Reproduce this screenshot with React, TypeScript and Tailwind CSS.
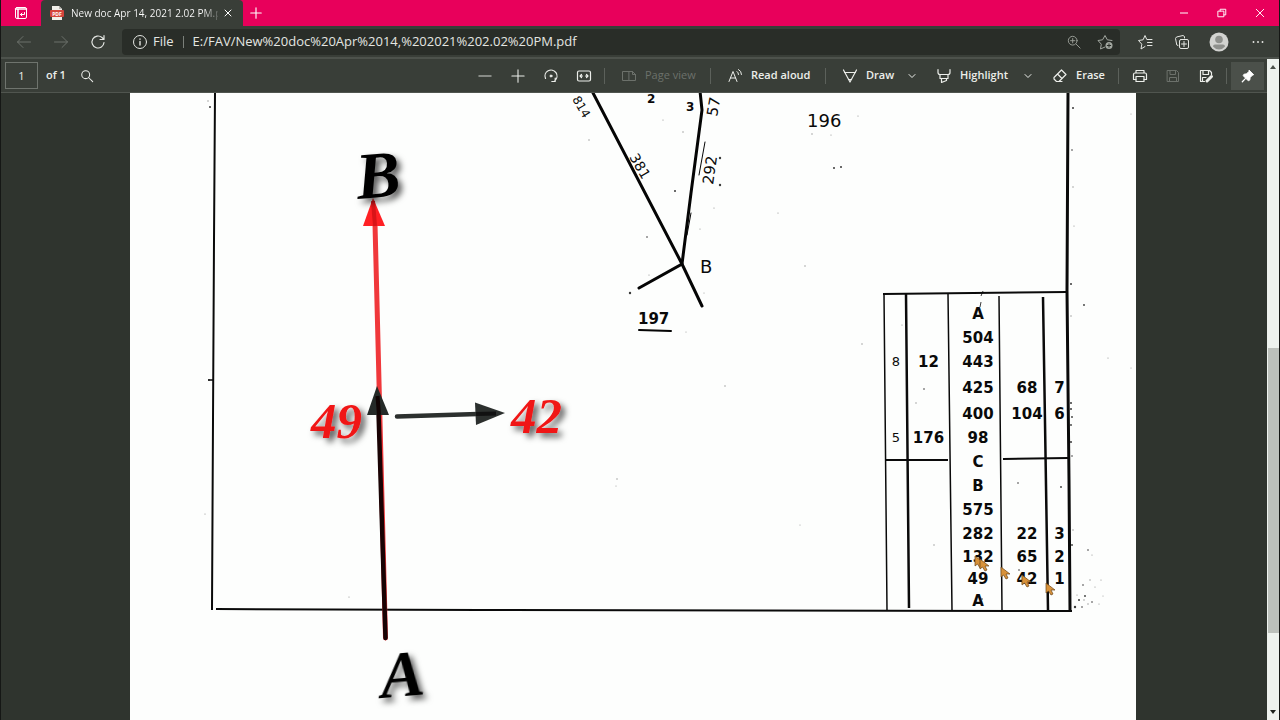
// PDF viewer window: tab strip, address bar, PDF toolbar, and the scanned survey sheet
// with its measurement ladder and the arrows drawn on top.

import type { ReactNode } from "react"

type Dot = [number, number, number]

// Measurement ladder, top to bottom: [left no., left offset, chain, right offset, right no.]
const ladder: { cells: string[]; height: string }[] = [
    { cells: ["", "", "A", "", ""], height: "h-6" },
    { cells: ["", "", "504", "", ""], height: "h-6" },
    { cells: ["8", "12", "443", "", ""], height: "h-6" },
    { cells: ["", "", "425", "68", "7"], height: "h-7" },
    { cells: ["", "", "400", "104", "6"], height: "h-6" },
    { cells: ["5", "176", "98", "", ""], height: "h-6" },
    { cells: ["", "", "C", "", ""], height: "h-6" },
    { cells: ["", "", "B", "", ""], height: "h-6" },
    { cells: ["", "", "575", "", ""], height: "h-6" },
    { cells: ["", "", "282", "22", "3"], height: "h-6" },
    { cells: ["", "", "132", "65", "2"], height: "h-[22px]" },
    { cells: ["", "", "49", "42", "1"], height: "h-[22px]" },
    { cells: ["", "", "A", "", ""], height: "h-[22px]" },
]

// Dirt left by the scanner
const specks: Dot[] = [
    [675, 191, 1], [720, 158, 1.2], [720, 185, 1.2], [834, 168, 1], [841, 167, 1], [630, 293, 1.2],
    [647, 237, 0.8], [805, 266, 0.7], [778, 213, 0.6], [812, 134, 0.7], [831, 135, 0.6], [858, 116, 0.6],
    [663, 120, 0.6], [683, 132, 0.7], [589, 140, 0.7], [700, 229, 0.6], [714, 208, 0.6], [862, 344, 0.7],
    [725, 386, 0.7], [617, 479, 0.7], [616, 486, 0.5], [800, 525, 0.5], [924, 389, 0.8], [934, 545, 0.7],
    [902, 325, 0.6], [1084, 305, 0.9], [1108, 358, 0.6], [1131, 368, 0.5], [1061, 487, 0.9], [1018, 483, 0.8],
    [1073, 108, 1], [1072, 150, 0.8], [1073, 187, 0.7], [1074, 226, 0.6], [1071, 284, 1], [1071, 316, 0.7],
    [1071, 403, 1], [1071, 409, 1], [1072, 417, 0.9], [1071, 425, 0.9], [1071, 442, 1], [1072, 456, 0.8],
    [1088, 550, 0.8], [1092, 555, 0.6], [1073, 530, 0.7], [1072, 545, 0.9], [1083, 585, 0.8], [1090, 580, 0.7],
    [1095, 587, 0.6], [1101, 580, 0.6], [1085, 596, 0.9], [1079, 600, 1], [1092, 602, 0.8], [1075, 607, 1.2],
    [1082, 607, 0.8], [1088, 604, 0.7], [1099, 604, 0.6], [1103, 596, 0.5], [1084, 600, 0.7], [1077, 595, 0.6],
    [208, 101, 0.7], [210, 107, 1], [205, 514, 0.6], [209, 380, 1], [349, 597, 0.6], [1131, 114, 0.5],
    [916, 403, 0.7], [982, 599, 0.8], [1019, 570, 0.8], [686, 332, 0.5], [704, 293, 0.5], [649, 275, 0.6],
]

const cursors = [[975, 556], [980, 559], [1001, 567], [1022, 575], [1046, 583]]

function Icon(props: { children: ReactNode; box?: string; size?: string }) {
    return (
        <svg
            viewBox={props.box ?? "0 0 16 16"}
            className={props.size ?? "size-4 shrink-0"}
            fill="none"
            stroke="currentColor"
            strokeLinecap="round"
            strokeLinejoin="round"
            aria-hidden="true"
        >
            {props.children}
        </svg>
    )
}

function IconButton(props: { label: string; width: string; children: ReactNode; disabled?: boolean }) {
    return (
        <button
            type="button"
            aria-label={props.label}
            disabled={props.disabled}
            className={`flex h-full shrink-0 items-center justify-center disabled:text-[#6c716b] ${props.width}`}
        >
            {props.children}
        </button>
    )
}

function Separator() {
    return <div className="mx-1 h-4 w-px shrink-0 bg-[#5c615b]" />
}

function ChevronIcon() {
    return <Icon size="size-2"><path d="M2 5l6 6 6-6" strokeWidth="2" /></Icon>
}

function TitleBar() {
    return (
        <header className="flex h-[26px] items-stretch bg-[#e8005b] text-white">
            <IconButton label="Tab actions menu" width="w-10">
                <Icon size="size-4">
                    <rect x="2.5" y="2.5" width="11" height="11" rx="1.5" />
                    <path d="M2.500 4h11M5 4v9.500" strokeWidth="1.500" />
                    <path d="M11.500 7.500v2h-4M9 8L7.500 9.500 9 11" />
                </Icon>
            </IconButton>
            <div className="flex w-[202px] items-center rounded-t-sm bg-[#393e38] pl-[8px]">
                <svg viewBox="0 0 16 16" className="size-4 shrink-0" aria-hidden="true">
                    <path d="M3 1h7l3 3v11H3z" fill="#f1efea" />
                    <path d="M10 1v3h3z" fill="#b9b6b2" />
                    <rect x="1" y="5" width="14" height="7" rx="1" fill="#d5453d" />
                    <text x="8" y="10.500" textAnchor="middle" fontSize="5" fontWeight="700" fill="#fff">PDF</text>
                </svg>
                <span className="ml-[6px] w-[147px] bg-linear-to-r from-white from-90% to-white/20 bg-clip-text text-[10px] whitespace-nowrap text-transparent">
                    New doc Apr 14, 2021 2.02 PM.p
                </span>
                <button type="button" aria-label="Close tab" className="flex h-full w-5 items-center justify-center">
                    <Icon size="size-2"><path d="M2 2l12 12M14 2L2 14" strokeWidth="2" /></Icon>
                </button>
            </div>
            <IconButton label="New tab" width="w-[26px]">
                <Icon size="size-3"><path d="M8 1v14M1 8h14" strokeWidth="1.500" /></Icon>
            </IconButton>
            <div className="ml-auto flex">
                <IconButton label="Minimize" width="w-[38px]">
                    <Icon size="size-2"><path d="M0 8h16" strokeWidth="2" /></Icon>
                </IconButton>
                <IconButton label="Restore" width="w-[38px]">
                    <Icon size="size-[10px]">
                        <path d="M2 5h9v9H2zM5 5V2h9v9h-3" strokeWidth="1.500" />
                    </Icon>
                </IconButton>
                <IconButton label="Close" width="w-[38px]">
                    <Icon size="size-[10px]"><path d="M2 2l12 12M14 2L2 14" strokeWidth="1.500" /></Icon>
                </IconButton>
            </div>
        </header>
    )
}

function AddressBar() {
    return (
        <nav className="flex h-[33px] items-center border-b-2 border-[#4d524c] bg-[#393e38] pl-1 text-[#e4e6e2]">
            <IconButton label="Back" width="w-[37px]" disabled>
                <Icon><path d="M14.500 8h-13M7 2.500L1.500 8 7 13.500" /></Icon>
            </IconButton>
            <IconButton label="Forward" width="w-[37px]" disabled>
                <Icon><path d="M1.500 8h13M9 2.500L14.500 8 9 13.500" /></Icon>
            </IconButton>
            <IconButton label="Refresh" width="w-[37px]">
                <Icon><path d="M14 8.500A6 6 0 1 1 12 3.500L13.500 5M14 1.500V5.500H10" strokeWidth="1.200" /></Icon>
            </IconButton>
            <div className="mr-[6px] ml-[6px] flex h-[26px] min-w-0 flex-1 items-center rounded-sm bg-[#292d28] pl-[10px] text-[13px]">
                <Icon>
                    <circle cx="8" cy="8" r="6.500" />
                    <path d="M8 7.500V11M8 5v.2" strokeWidth="1.400" />
                </Icon>
                <label htmlFor="address" className="ml-[5px]">File</label>
                <div className="mr-[9px] ml-[9px] h-3 w-px shrink-0 bg-[#7b807a]" />
                <input
                    id="address"
                    type="text"
                    defaultValue="E:/FAV/New%20doc%20Apr%2014,%202021%202.02%20PM.pdf"
                    className="min-w-0 flex-1 bg-transparent outline-none"
                />
                <button type="button" aria-label="Zoom" className="flex w-[31px] justify-center text-[#a2a7a0]">
                    <Icon size="size-[14px]">
                        <circle cx="6.500" cy="6.500" r="5" />
                        <path d="M10.500 10.500L15 15M6.500 4v5M4 6.500h5" />
                    </Icon>
                </button>
                <button type="button" aria-label="Add this page to favorites" className="flex w-[31px] justify-center text-[#a2a7a0]">
                    <Icon>
                        <path d="M8 13l-4.500 2 .8-4.800L1 6.500l4.600-.7L8 1.500l2.300 4.300 4.700.7" />
                        <circle cx="12" cy="11.500" r="3.500" fill="currentColor" stroke="none" />
                        <path d="M12 9.800v3.400M10.300 11.500h3.400" stroke="#292d28" />
                    </Icon>
                </button>
            </div>
            <IconButton label="Favorites" width="w-[37px]">
                <Icon>
                    <path d="M8 12.500l-4 2.500.8-4.800L1.500 6.500l4.600-.7L8 1.500l1.800 4H15M10.500 8.500H15M10.500 11.500H15" />
                </Icon>
            </IconButton>
            <IconButton label="Collections" width="w-[37px]">
                <Icon>
                    <rect x="5.500" y="5.500" width="9" height="9" rx="1.500" />
                    <path d="M10 7.500v5M7.500 10h5M4 11.500L2.800 11 1.500 4.500 2.500 3 9 1.500l1.500 1V4" />
                </Icon>
            </IconButton>
            <IconButton label="Profile" width="w-[37px]">
                <svg viewBox="0 0 20 20" className="size-5" aria-hidden="true">
                    <circle cx="10" cy="10" r="9.500" fill="#d2d3d0" />
                    <circle cx="10" cy="7.500" r="3.800" fill="#8e908c" />
                    <path d="M4 14.500Q4 12.500 6 12.500h8q2 0 2 2-2.500 3-6 3t-6-3z" fill="#8e908c" />
                </svg>
            </IconButton>
            <IconButton label="Settings and more" width="w-[42px]">
                <Icon size="size-3">
                    <path d="M2 8h.01M8 8h.01M14 8h.01" strokeWidth="2.500" />
                </Icon>
            </IconButton>
        </nav>
    )
}

function ToolButton(props: { label: string; width: string; icon: ReactNode; disabled?: boolean }) {
    return (
        <button
            type="button"
            disabled={props.disabled}
            className={`flex h-full shrink-0 items-center gap-2 pl-3 font-semibold whitespace-nowrap disabled:font-normal disabled:text-[#6c716b] ${props.width}`}
        >
            {props.icon}
            {props.label}
        </button>
    )
}

function PdfToolbar() {
    return (
        <div role="toolbar" aria-label="PDF tools" className="flex h-[34px] items-center border-b border-[#50554f] bg-[#393e38] pr-[3px] pl-1 text-[11px] text-[#eceeea]">
            <input
                id="page"
                type="text"
                defaultValue="1"
                className="h-[27px] w-[33px] border border-[#6f746e] bg-transparent text-center outline-none"
            />
            <label htmlFor="page" className="ml-2 font-semibold whitespace-nowrap">of 1</label>
            <button type="button" aria-label="Search" className="ml-[14px] flex h-full items-center">
                <Icon size="size-[14px]">
                    <circle cx="6.500" cy="6.500" r="4.500" strokeWidth="1.200" />
                    <path d="M10 10l4.500 4.500" strokeWidth="1.200" />
                </Icon>
            </button>

            <div className="ml-auto flex h-full items-center">
                <IconButton label="Zoom out" width="w-[33px]">
                    <Icon size="size-[14px]"><path d="M1 8h14" /></Icon>
                </IconButton>
                <IconButton label="Zoom in" width="w-[33px]">
                    <Icon size="size-[14px]"><path d="M1 8h14M8 1v14" strokeWidth="1.200" /></Icon>
                </IconButton>
                <IconButton label="Rotate" width="w-[33px]">
                    <Icon>
                        <path d="M2.500 10.400A6 6 0 1 1 11.800 12.700M8.800 13.500H12.200V10" strokeWidth="1.200" />
                        <circle cx="8" cy="8" r="1" fill="currentColor" />
                    </Icon>
                </IconButton>
                <IconButton label="Fit to width" width="w-[33px]">
                    <Icon>
                        <rect x="1.500" y="3" width="13" height="10" rx="1.500" strokeWidth="1.200" />
                        <path d="M4 8h2.500M9.500 8H12M5.500 6.500L4 8l1.500 1.500M10.500 6.500L12 8l-1.500 1.500" strokeWidth="1.200" />
                    </Icon>
                </IconButton>
                <Separator />
                <ToolButton
                    label="Page view"
                    width="w-[97px]"
                    disabled
                    icon={<Icon><path d="M7.500 3.500h-6v9h6zM7.500 12.500h7V6.500L11.500 3.500h-4M11.500 3.500v3h3" /></Icon>}
                />
                <Separator />
                <ToolButton
                    label="Read aloud"
                    width="w-[106px]"
                    icon={<Icon><path d="M2 13.500L6 3.500l4 10M3.500 10h5M10 3.500q1.500 1 1.500 3M11.500 1.500q3 1.500 3 5" /></Icon>}
                />
                <Separator />
                <ToolButton
                    label="Draw"
                    width="w-[70px]"
                    icon={<Icon><path d="M1.500 2l6.500 12L14.500 2M2.500 4.500h11M6.500 11.500h3" strokeWidth="1.200" /></Icon>}
                />
                <IconButton label="Draw options" width="w-6"><ChevronIcon /></IconButton>
                <ToolButton
                    label="Highlight"
                    width="w-[92px]"
                    icon={<Icon><path d="M2 1.500v3q0 2 2 2h8q2 0 2-2v-3M4 6.500v4h8v-4M5.500 10.500v4l5-2v-2" strokeWidth="1.200" /></Icon>}
                />
                <IconButton label="Highlight options" width="w-6"><ChevronIcon /></IconButton>
                <ToolButton
                    label="Erase"
                    width="w-[74px]"
                    icon={<Icon><path d="M9.500 2L14 6.500 7 13.500H4.500L2 11V9.500zM5.500 6l4.500 4.500M7 13.500h3" strokeWidth="1.200" /></Icon>}
                />
                <Separator />
                <IconButton label="Print" width="w-[33px]">
                    <Icon>
                        <path d="M4 5V2.500h8V5M4 11.500H1.500V6.500Q1.500 5 3 5h10q1.500 0 1.500 1.500v5H12" strokeWidth="1.200" />
                        <rect x="4" y="8.500" width="8" height="5" strokeWidth="1.200" />
                    </Icon>
                </IconButton>
                <IconButton label="Save" width="w-[33px]" disabled>
                    <Icon><path d="M2.500 2.500h9l2 2v9h-11zM5 2.500v4h5.500v-4M4.500 13.500v-4h7v4" /></Icon>
                </IconButton>
                <IconButton label="Save as" width="w-[33px]">
                    <Icon>
                        <path d="M6.500 13.500h-4v-11h9l2 2v2M5 2.500v4h5.500v-4M4.500 13.500v-4h3.500" strokeWidth="1.200" />
                        <path d="M9 13l4.500-4.500" strokeWidth="3" />
                    </Icon>
                </IconButton>
                <Separator />
                <button type="button" aria-label="Unpin toolbar" className="flex h-7 w-[33px] items-center justify-center bg-[#4b504a] text-white">
                    <Icon size="size-[14px]">
                        <path d="M9.500 1.500l5 5-1.500.7-2.500 2.500-.5 3-1.700.8L2.500 7.700l.8-1.700 3-.5L8.800 3z" fill="currentColor" />
                        <path d="M5 11l-3.500 3.500" strokeWidth="1.500" />
                    </Icon>
                </button>
            </div>
        </div>
    )
}

function LadderTable() {
    return (
        <table aria-label="Survey measurements" className="absolute top-[209px] left-[755px] w-[186px] table-fixed border-collapse text-center font-['DejaVu_Sans',sans-serif] text-[15px]/4 font-bold text-[#0a0a0a]">
            <colgroup>
                <col className="w-[22px]" />
                <col className="w-[43px]" />
                <col className="w-[56px]" />
                <col className="w-[42px]" />
                <col className="w-[23px]" />
            </colgroup>
            <tbody>
                {ladder.map((row, i) => (
                    <tr key={i} className={row.height}>
                        {row.cells.map((cell, j) => (
                            <td key={j} className={j === 0 ? "p-0 text-[13px]/4 font-normal" : "p-0"}>{cell}</td>
                        ))}
                    </tr>
                ))}
            </tbody>
        </table>
    )
}

function SurveyDrawing() {
    return (
        <svg viewBox="130 93 1006 627" className="pointer-events-none relative block w-full" role="img" aria-label="Survey sheet drawing">
            <defs>
                <filter id="lift" x="-30%" y="-30%" width="170%" height="170%">
                    <feDropShadow dx="4" dy="4" stdDeviation="3" floodColor="#000" floodOpacity="0.65" />
                </filter>
            </defs>

            {/* sheet border */}
            <g stroke="#0a0a0a" fill="none">
                <path d="M215 93L214 240 213 420 212 610" strokeWidth="2" />
                <path d="M216 609L480 610 1072 611" strokeWidth="2" />
                <path d="M1068 93L1067 291 1069 480 1070 610" strokeWidth="3" />
                <path d="M208 380h5" strokeWidth="1.500" />
            </g>

            {/* ladder rules */}
            <g stroke="#0a0a0a" fill="none" strokeWidth="1.500">
                <path d="M883 294L1067 292" strokeWidth="2" />
                <path d="M884 294L887 610M948 294L952 610M999 296L1002 610" />
                <path d="M906 294L909 608M1043 297L1048 610" strokeWidth="2.500" />
                <path d="M886 460H948M1003 459L1068 458" strokeWidth="2" />
                <path d="M983 291l-2 5M981 302l-1 5" strokeWidth="0.800" />
            </g>

            {/* field boundaries */}
            <g stroke="#050505" fill="none" strokeWidth="3" strokeLinecap="round">
                <path d="M592 91L682 264 702 306" />
                <path d="M700 91L702 110 691 193 682 264 639 288" />
                <path d="M705 142L699 175M691 213L687 235" strokeWidth="1" />
                <path d="M639 330L671 331" strokeWidth="2" />
            </g>

            <g fontFamily="'DejaVu Sans', sans-serif" fontSize="14" fill="#0a0a0a">
                <text x="807" y="127" fontSize="18">196</text>
                <text x="638" y="324" fontSize="15" fontWeight="700">197</text>
                <text x="700" y="273" fontSize="18">B</text>
                <text x="686" y="111" fontSize="12" fontWeight="700">3</text>
                <text x="647" y="103" fontSize="12" fontWeight="700">2</text>
                <text x="629" y="157" transform="rotate(60 629 157)">381</text>
                <text x="572" y="99" transform="rotate(60 572 99)" fontSize="12">814</text>
                <text x="713" y="185" transform="rotate(-82 713 185)" fontSize="15">292</text>
                <text x="717" y="117" transform="rotate(-80 717 117)" fontSize="15">57</text>
            </g>

            {specks.map(([x, y, r]) => (
                <circle key={`${x}-${y}`} cx={x} cy={y} r={r} fill="#222" opacity={r < 0.8 ? 0.5 : 0.9} />
            ))}

            {/* chain line A to B, with the part already measured in black */}
            <path d="M375 224L385.500 638" stroke="#f0383b" strokeWidth="5" strokeLinecap="round" />
            <path d="M373 198L385 226H363z" fill="#ff2024" />
            <path d="M373 201L375 226" stroke="#d91418" strokeWidth="4" />
            <path d="M378.500 412L385.500 638" stroke="#190304" strokeWidth="4.500" strokeLinecap="round" />
            <path d="M377 386L389 415H367z" fill="#252a28" />
            <path d="M377.500 396L379 415" stroke="#110404" strokeWidth="4" />

            {/* offset to the right */}
            <path d="M397 416.500L478 414" stroke="#2c302e" strokeWidth="4.500" strokeLinecap="round" />
            <path d="M475 402.500L505 413 476 425z" fill="#2c302e" />
            <path d="M476 414L496 413.500" stroke="#111" strokeWidth="4" />

            <g fontFamily="'Liberation Serif', serif" fontWeight="700" fontStyle="italic" filter="url(#lift)">
                <text x="358" y="199" fontSize="66" transform="rotate(-5 358 199)" fill="#000">B</text>
                <text x="382" y="698" fontSize="66" transform="rotate(-5 382 698)" fill="#000">A</text>
                <text x="311" y="438" fontSize="51" fill="#f01414">49</text>
                <text x="511" y="433" fontSize="51" fill="#f01414">42</text>
            </g>

            {cursors.map(([x, y]) => (
                <path
                    key={x}
                    d="M0 0L0 10 2.500 8 5 12 7 11 5 7H9z"
                    transform={`translate(${x} ${y})`}
                    fill="#d8923a"
                    stroke="#6b4518"
                    strokeWidth="0.700"
                />
            ))}
        </svg>
    )
}

function Scrollbar() {
    return (
        <div aria-hidden="true" className="flex w-3 shrink-0 flex-col items-center bg-[#eef2ee] py-1">
            <svg viewBox="0 0 8 8" className="size-2" fill="#4a4f49"><path d="M1 6h6L4 2z" /></svg>
            <div className="grow-[277]" />
            <div className="w-full grow-[285] pl-px"><div className="h-full bg-[#bcc0bb]" /></div>
            <div className="grow-[75]" />
            <svg viewBox="0 0 8 8" className="size-2" fill="#1d211c"><path d="M1 2h6L4 6z" /></svg>
        </div>
    )
}

export default function App() {
    return (
        <div className="flex min-h-screen flex-col border-x border-[#151715] bg-[#2f342e] font-['Open_Sans','Noto_Sans',sans-serif]">
            <TitleBar />
            <AddressBar />
            <div className="flex flex-1">
                <div className="flex min-w-0 flex-1 flex-col">
                    <PdfToolbar />
                    <main className="pr-[131px] pl-[129px]">
                        <div className="relative bg-[#fdfefd]">
                            <LadderTable />
                            <SurveyDrawing />
                        </div>
                    </main>
                </div>
                <Scrollbar />
            </div>
        </div>
    )
}
